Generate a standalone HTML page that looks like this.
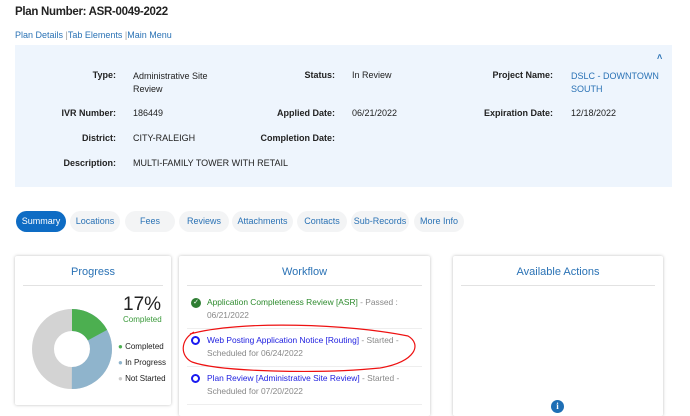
<!DOCTYPE html>
<html><head><style>
*{margin:0;padding:0;box-sizing:border-box}
body{width:690px;height:413px;overflow:hidden;background:#fff;font-family:"Liberation Sans",sans-serif;color:#222;position:relative;font-size:9px}
.a{position:absolute;white-space:nowrap}
.lab{font-weight:bold;text-align:right}
.blue{color:#2a72b5}
.panel{position:absolute;left:15px;top:45px;width:657px;height:142px;background:#eef5fd}
.tab{position:absolute;top:211px;height:21px;border-radius:11px;background:#f3f4f5;color:#2a72b5;font-size:9px;text-align:center;line-height:21px}
.card{position:absolute;top:256px;background:#fff;box-shadow:0 0 3px rgba(0,0,0,.25);border-radius:2px}
.card h3{font-weight:normal;color:#2a72b5;font-size:11px;text-align:center;margin-top:10px}
.card hr{border:0;border-top:1px solid #e2e2e2;margin:7px 8px 0}
.wf{position:absolute;left:28px;font-size:8.4px;line-height:13px;white-space:nowrap}
.g{color:#888}
</style></head><body>
<div class="a" style="left:15px;top:6px;font-size:11.5px;font-weight:bold;letter-spacing:-0.3px">Plan Number: ASR-0049-2022</div>
<div class="a blue" style="left:15px;top:30px;font-size:9px">Plan Details <span style="color:#999">|</span>Tab Elements <span style="color:#999">|</span>Main Menu</div>
<div class="panel"></div>
<div class="a" style="left:657px;top:52px;color:#2a72b5;font-size:9px;font-weight:bold">˄</div>
<div class="a lab" style="right:574px;top:70px">Type:</div>
<div class="a" style="left:133px;top:70px;line-height:13px">Administrative Site<br>Review</div>
<div class="a lab" style="right:574px;top:108px">IVR Number:</div>
<div class="a" style="left:133px;top:108px">186449</div>
<div class="a lab" style="right:574px;top:133px">District:</div>
<div class="a" style="left:133px;top:133px">CITY-RALEIGH</div>
<div class="a lab" style="right:574px;top:158px">Description:</div>
<div class="a" style="left:133px;top:158px">MULTI-FAMILY TOWER WITH RETAIL</div>
<div class="a lab" style="right:355px;top:70px">Status:</div>
<div class="a" style="left:352px;top:70px">In Review</div>
<div class="a lab" style="right:355px;top:108px">Applied Date:</div>
<div class="a" style="left:352px;top:108px">06/21/2022</div>
<div class="a lab" style="right:355px;top:133px">Completion Date:</div>
<div class="a lab" style="right:137px;top:70px">Project Name:</div>
<div class="a blue" style="left:571px;top:70px;line-height:13px">DSLC - DOWNTOWN<br>SOUTH</div>
<div class="a lab" style="right:137px;top:108px">Expiration Date:</div>
<div class="a" style="left:571px;top:108px">12/18/2022</div>

<div class="tab" style="left:16px;width:50px;background:#0e6cc4;color:#fff">Summary</div>
<div class="tab" style="left:70px;width:50px">Locations</div>
<div class="tab" style="left:125px;width:50px">Fees</div>
<div class="tab" style="left:179px;width:50px">Reviews</div>
<div class="tab" style="left:232px;width:61px">Attachments</div>
<div class="tab" style="left:297px;width:50px">Contacts</div>
<div class="tab" style="left:351px;width:58px">Sub-Records</div>
<div class="tab" style="left:414px;width:50px">More Info</div>

<div class="card" style="left:15px;width:156px;height:149px"><h3>Progress</h3><hr>
<svg style="position:absolute;left:17px;top:53px" width="80" height="80" viewBox="-40 -40 80 80">
<circle r="29" fill="none" stroke="#d3d3d3" stroke-width="22"/>
<circle r="29" fill="none" stroke="#8fb4cc" stroke-width="22" stroke-dasharray="91.1 200" transform="rotate(-90)"/>
<circle r="29" fill="none" stroke="#4caf50" stroke-width="22" stroke-dasharray="31 200" transform="rotate(-90)"/>
</svg>
<div class="a" style="left:108px;top:38px;font-size:19px">17%</div>
<div class="a" style="left:108px;top:59px;font-size:8px;color:#3a9a3a">Completed</div>
<div class="a" style="left:103px;top:83px;font-size:8px;line-height:16px"><span style="color:#4caf50">●</span> Completed<br><span style="color:#8fb4cc">●</span> In Progress<br><span style="color:#ccc">●</span> Not Started</div>
</div>

<div class="card" style="left:179px;width:251px;height:160px"><h3>Workflow</h3><hr>
<div class="a" style="left:12px;top:42px;width:10px;height:10px;border-radius:50%;background:#2e7d32;color:#fff;font-size:7px;text-align:center;line-height:10px">✓</div>
<div class="wf" style="top:40px"><span style="color:#2e8b2e">Application Completeness Review [ASR]</span> <span class="g">- Passed :</span><br><span class="g">06/21/2022</span></div>
<div style="position:absolute;left:0;right:0;top:72px;border-top:1px solid #eee;margin:0 8px"></div>
<div class="a" style="left:12px;top:80px;width:9px;height:9px;border-radius:50%;border:2.5px solid #1a1af0"></div>
<div class="wf" style="top:78px"><span style="color:#2020e0">Web Posting Application Notice [Routing]</span> <span class="g">- Started -</span><br><span class="g">Scheduled for 06/24/2022</span></div>
<div style="position:absolute;left:0;right:0;top:110px;border-top:1px solid #eee;margin:0 8px"></div>
<div class="a" style="left:12px;top:118px;width:9px;height:9px;border-radius:50%;border:2.5px solid #1a1af0"></div>
<div class="wf" style="top:116px"><span style="color:#2020e0">Plan Review [Administrative Site Review]</span> <span class="g">- Started -</span><br><span class="g">Scheduled for 07/20/2022</span></div>
<div style="position:absolute;left:0;right:0;top:148px;border-top:1px solid #eee;margin:0 8px"></div>
</div>
<svg style="position:absolute;left:180px;top:322px" width="240" height="55"><path d="M10 12 C60 -2 170 2 228 14 C242 22 236 40 200 46 C140 52 40 50 12 40 C0 34 0 18 14 10" fill="none" stroke="#e11" stroke-width="1.2"/></svg>

<div class="card" style="left:453px;width:210px;height:160px"><h3>Available Actions</h3><hr>
<div class="a" style="left:98px;top:144px;width:13px;height:13px;border-radius:50%;background:#1f6fb5;color:#fff;font-size:9px;font-weight:bold;text-align:center;line-height:13px;font-family:'Liberation Serif',serif">i</div>
</div>
</body></html>
